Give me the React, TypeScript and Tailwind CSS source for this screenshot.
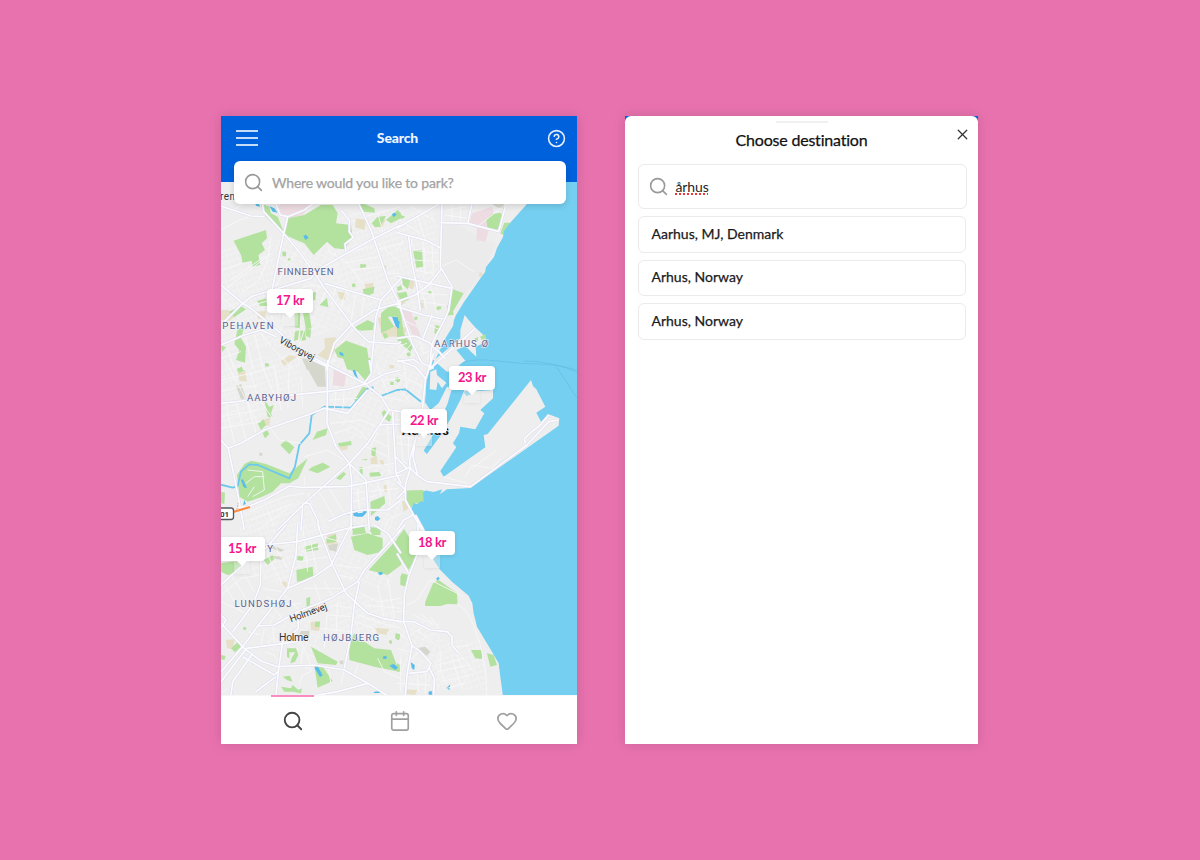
import React from 'react';
import { Search, Calendar, Heart, X, CircleHelp } from 'lucide-react';

type Sheet = {
  x: number;
  y: number;
  park: string;
  sand: string;
  rose: string;
  stone: string;
  pond: string;
  major: string;
  minor: string;
};

/* Map sheets: each is drawn in thirds of a pixel from its own origin. */
const sheets: Sheet[] = [
  {
    x: 221,
    y: 200,
    park: 'M38,122L135,90L138,115L122,130L132,150L112,165L118,195L95,200L92,182L65,188L60,165Z M118,10L145,20L150,40L170,50L190,100L160,75L135,50Z M200,55L250,45L300,15L335,15L350,40L345,70L390,75L395,112L370,148L340,145L318,125L278,165L250,130L190,105Z M452,70L470,50L495,48L478,80L462,82Z M495,60L530,30L540,40L540,55L510,70Z M412,10L430,12L460,25L462,38L430,35Z M183,155h12v14h-10z M200,177l8,-4l2,8l-7,3z M417,193l17,0l2,9l-18,2z M392,252l10,-2l2,10l-9,2z M425,268L460,260L458,280L430,290Z M108,303L135,295L138,318L118,318Z M268,278L285,276L283,300L272,302Z M295,315L318,293L322,322Z M220,340L238,338L236,385L222,382Z M245,335L265,340L272,385L255,388L250,360Z M222,395l12,-4l-3,28l-12,4z M238,392l14,0l3,28l-17,3z M252,388l18,0l-2,26l-12,-6z M23,335L60,318L75,328L40,352Z M50,387L70,380L60,415L75,440L72,488L45,480L55,450L40,432Z M0,436l15,6l-12,14z M340,450L375,422L438,445L448,510L400,510L380,480L350,472Z M480,340L505,318L540,322L540,350L500,350L520,380L480,400Z M395,385L440,360L460,370L455,390L420,392Z M485,400l12,0l5,12l-12,4z M530,400l10,-10v20z',
    sand: 'M405,55L435,60L430,90L402,82Z M475,65l20,-8l-12,26l-18,-4z M430,252L458,248L455,278L435,272Z M350,275L375,278L372,300L355,296Z M310,415L345,412L340,455L325,485L290,465L312,445Z M180,485L205,465L228,470L190,497Z M0,330L20,330L42,350L25,362L0,360Z M105,335l30,-2l-2,25l-22,-2z M235,320l36,-6l0,18l-30,4z M470,355L500,345L512,385L540,365L540,410L485,410Z M485,195l12,2l-2,14l-10,-3z',
    rose: 'M180,12L272,12L245,45L200,55L180,42L165,25Z',
    stone: 'M243,475L270,480L310,497L312,510L258,510Z',
    pond: 'M145,18L160,25L170,38L155,35Z M102,10l10,0l6,10l-12,-2z M247,108l8,-4l8,9l-10,7z M513,42l8,-4l6,6l-10,8z M355,455l10,4l4,10l-12,-4z M513,350L530,352L535,385L525,380Z',
    major:
      'M120,-20L128,35L195,108L230,150L285,225L310,265L405,390L442,425 M200,50L185,115L153,270 M160,0L178,45L200,50L250,30L290,0 M0,18L90,48L130,50 M360,30L385,60L385,95L397,112L372,132L375,155 M410,5L450,90L500,240L540,320 M540,75L440,125L285,212L270,235L90,290L60,315L0,375 M0,255L65,310L90,325L180,400L230,460L320,500 M310,250L480,300L540,235 M540,308L460,330L390,375L340,430L315,510 M480,300L465,350L450,510 M0,435L70,405L120,390L165,410 M440,425L530,432L540,425',
    minor:
      'M0,90L45,65L90,48 M10,270L150,160 M30,240L130,170 M5,210L60,190 M205,110L285,212 M230,150L200,190L165,260 M180,210L235,215 M320,150L380,190L430,260 M350,170L440,140 M370,190L470,170 M390,210L485,200 M290,240L350,310L390,330 M315,268L300,310 M345,262L330,320 M375,272L355,340 M405,280L385,385 M430,285L420,360 M95,365L150,440L210,500 M75,410L95,510 M0,475L60,455 M20,445L40,510 M100,395L125,500 M250,390L230,450 M190,335L180,395 M150,345L175,400 M0,290L45,330 M165,290L270,255L300,260 M430,50L540,20 M470,130L540,190 M460,150L540,130 M490,220L540,220 M470,40L490,110 M80,320L150,300 M360,430L400,385 M345,480L315,490 M30,35L70,10 M150,110L140,180L115,240L60,280',
  },
  {
    x: 397,
    y: 200,
    park: 'M48,150L75,150L78,200L58,203Z M268,60L285,42L312,38L318,60L300,90L272,85Z M322,68L340,68L320,105L310,100Z M168,268L200,280L165,340L150,322Z M15,235L40,238L32,268L18,255Z M0,262l12,-6l5,12l-15,5z M0,280L28,275L35,300L15,305Z M92,275l10,-3l4,6l-9,4z M116,322l14,-4l4,8l-14,5z M150,335l18,-3l2,12l-20,3z M115,375L128,378L125,405L112,400Z M52,352l8,-3l2,9l-9,3z M28,460l10,-3l4,8l-9,5z M0,320L12,335L20,400L48,440L40,455L0,420Z M0,40L25,50L15,56L0,50Z M240,380l4,6l-6,2z',
    sand: 'M32,240L55,242L48,268L28,262Z M0,275L22,285L25,310L5,318Z M68,302L80,300L80,325L72,325Z M0,385L30,380L25,400L5,412Z M248,215l10,5l-6,12l-6,-3z',
    rose: 'M225,40L255,30L285,20L290,40L268,60L275,90L265,125L238,120L240,88L218,70Z M14,330L38,325L72,410L50,412Z',
    stone: 'M285,12L322,12L320,25L300,22Z',
    pond: 'M0,360l8,5l-3,20h-5z',
    major:
      'M135,10L130,200L165,260L155,330L140,365L108,425L102,455L100,510 M0,85L60,50L130,10 M0,98L90,122L132,145 M130,68L212,70L225,10 M212,70L305,95L325,20 M0,228L165,265 M0,305L55,285L95,255L135,205 M35,110L45,190L60,260L70,332 M0,320L80,345L138,357 M5,310L45,430L75,490L110,505 M0,415L45,408L60,410L100,430L145,475 M105,345L78,415 M100,505L150,460L235,385 M0,485L50,478L66,490',
    minor:
      'M130,200L178,180L230,215 M150,30L210,20 M145,45L212,55 M165,15L165,68 M190,15L190,70 M235,85L330,10 M20,120L0,150 M45,110L40,170 M80,125L85,225 M105,135L110,230 M40,150L130,160 M48,180L132,185 M50,210L110,220 M65,240L90,330 M100,255L120,340 M70,280L150,285 M70,305L145,315 M10,60L70,100 M40,20L110,60 M60,45L85,120 M85,370L130,390 M65,410L80,460L130,440 M45,430L0,480 M0,440L30,430 M20,360L60,380 M115,420L90,480 M100,360L130,365',
  },
  {
    x: 221,
    y: 360,
    park: 'M365,-10L450,-5L448,40L438,68L410,35L378,28Z M400,120L425,80L440,85L405,130Z M178,255L195,240L220,262L205,283Z M275,240L288,215L320,205L315,225Z M262,330L275,320L305,308L328,320L290,340Z M350,250L390,243L392,255L355,260Z M345,355L368,335L375,342L358,360Z M110,190L128,178L135,195L120,210Z M125,220L138,210L145,222L132,235Z M130,120L145,140L158,135L150,160L155,172L140,170Z M48,345L70,312L90,302L135,312L205,340L260,295L232,355L205,370L180,370L155,395L120,412L80,425L55,410Z M47,27L62,20L68,33L52,38Z M132,10l10,0l3,8l-12,2z M448,425L490,408L493,430L450,468Z M390,495L430,505L430,510L390,510Z M415,322h10v27h-8z M445,338l30,-2l5,12l-32,2z M452,265l14,-3l-3,28l-12,-4z M482,158l8,-8l22,20l-6,16l-18,-12z M0,395L12,398L10,432L0,430Z M508,65h10v10h-10z M524,52l14,3l-3,12l-12,-5z M420,300l18,-4v5z',
    sand: 'M50,35L72,30L78,65L55,62Z M180,0L215,0L190,13Z M128,180L148,172L145,200L130,195Z M355,260l25,-4l0,12l-18,4z M448,295L468,288L470,312L450,312Z M475,300l12,0l3,17l-10,-3z M488,375l8,0l2,22l-9,-3z M505,15l14,0l0,9l-14,2z',
    rose: 'M338,28L375,45L370,80L335,75Z',
    stone: 'M245,0L310,10L315,80L290,80Z M45,78L60,72L75,115L60,118Z M115,278l8,0l2,8l-9,2z',
    pond: 'M395,452L402,450L412,460L425,458L430,446L439,455L425,470L410,470L398,468Z M462,472l8,-4l8,8l-8,7l-8,-3z M70,420L66,435L75,432Z M60,360L66,358L78,385L68,382Z M395,30L402,30L412,58L400,45Z',
    major:
      'M0,130L230,103L380,88L440,70L490,42L540,30 M250,-20L320,15L430,70L480,110L505,150L540,155 M320,0L318,190L345,260L385,310L435,360L445,510 M0,240L22,265L50,400L70,510 M22,265L60,250L130,210L260,165L310,145L380,160L440,90 M50,442L80,440L130,420L205,378L240,382L380,380L450,365L540,345 M505,150L440,250L385,310L245,435L170,510 M245,435L240,510 M245,430L265,430L290,480L295,510 M385,310L392,360L390,510 M445,0L452,40L430,70 M515,155L525,340L540,370 M320,485L370,462L420,450L500,450L540,420 M478,195L540,192',
    minor:
      'M10,0L55,80L110,190 M0,60L90,40L160,20 M0,95L50,82L110,78 M85,30L110,110L155,175 M120,10L160,105 M160,15L180,150 M205,15L200,145 M240,50L245,140 M15,130L40,250 M45,130L75,240 M80,125L105,220 M0,170L110,150 M0,205L120,185 M140,195L175,240L240,250 M345,90L340,150 M370,90L365,150 M325,120L410,115 M330,190L420,180L470,200 M340,220L400,200L440,240 M250,290L320,270L370,300 M80,330L125,335L130,390L95,410 M75,370L100,350L130,350 M100,380L80,410 M250,350L250,380 M85,455L190,410L250,400 M90,480L215,430 M110,510L200,445 M140,450L160,500 M260,400L300,510 M290,390L345,480 M325,385L370,460 M390,400L530,385 M395,425L470,405 M410,385L415,450 M470,370L480,405 M500,360L510,450 M400,330L450,320L520,310 M435,260L500,290 M460,240L500,260 M475,200L450,260 M500,195L505,340 M540,460L500,480L490,510 M465,10L500,100 M490,60L540,55 M475,110L540,120',
  },
  {
    x: 397,
    y: 360,
    park: 'M27,372L78,380L82,425L50,432L40,448L25,415Z M10,275L35,272L38,285L22,292Z M0,50L10,60L0,70Z',
    sand: 'M15,425L30,420L35,445L20,455Z',
    rose: '',
    stone: '',
    pond: '',
    major:
      'M0,340L38,322L60,345L90,365L220,380L390,255L455,185L485,180 M110,-20L85,60L75,160L55,240L38,300L40,325L25,375L25,420L75,512 M0,365L25,390L0,415 M385,250L382,235L405,215L430,195L455,165 M0,510L20,480L48,465 M55,240L48,290L62,345 M0,0L55,20L85,55 M30,325L-5,290',
    minor:
      'M205,350L225,315L285,325L310,295 M225,325L300,270 M140,350L210,370 M0,230L70,235 M0,250L55,258 M10,225L20,320 M35,230L35,300 M0,180L60,175 M0,40L80,80 M20,0L30,90 M10,90L40,130 M440,180L400,220 M0,300L30,310',
  },
  {
    x: 221,
    y: 525,
    park: 'M0,115L45,108L80,100L50,140L20,150L0,140Z M395,8L430,5L435,25L395,30Z M390,35L440,25L485,40L485,80L440,90L400,75Z M440,5L480,10L478,30L455,30Z M540,30L540,120L500,150L443,135Z M226,135L275,125L278,160L228,170Z M250,65L290,55L292,75L252,80Z M230,92L248,95L245,108L228,105Z M256,220L268,215L266,250L257,252Z M316,40L345,28L346,50L318,55Z M128,105L155,90L160,102L140,120Z M283,290l14,0l-2,16l-13,0z M384,350L430,350L460,370L510,375L535,440L460,425L385,405Z M270,365L350,410L345,420L290,415Z M198,370L225,370L232,390L222,410L208,415L212,400L222,382L205,382L205,400L198,395Z M280,420L305,425L335,468L290,488Z M30,370L50,352L60,365L42,382Z M0,390l14,3l-4,12l-10,-2z M65,308l8,-3l4,7l-8,4z M505,345l8,2l-1,10l-8,-3z M524,325l14,3l-6,16l-10,-4z M185,455l22,-3l8,18l-16,-4z M180,485L210,490L215,480L232,495L243,490L240,505L218,500L190,500Z M388,350L400,325L415,350Z',
    sand: 'M182,170l15,0l0,16l-14,-2z M265,240L290,235L285,252L268,250Z M268,292L298,288L295,318L270,315Z M320,28L345,25L348,55L312,60Z M462,308L505,312L495,330L470,325Z M15,345L42,342L35,372L18,370Z',
    rose: '',
    stone: 'M150,60L190,75L180,80L155,72Z M150,92L185,95L185,105L165,102Z M320,60L352,55L345,80L325,75Z M240,318L265,318L265,332L235,328Z M355,408l12,-2l0,12l-9,0z',
    pond: 'M280,428l10,-5l15,28l-8,5z M470,143l12,-3l4,7l-9,4z M485,395l10,-3l3,8l-10,3z M505,422l12,-5l14,10l-8,8z M460,500l18,-2l0,6h-20z',
    major:
      'M0,180L55,130L130,75L195,0 M230,0L225,90L200,190L120,290L65,365L0,440 M290,0L335,120L375,205L440,265L485,280L540,290 M120,100L118,180L95,240L35,320 M130,60L230,50L380,10L440,0 M390,0L330,120L280,155L200,190 M540,15L430,135L410,170L330,220L230,260L160,300L110,303 M415,170L400,240L390,330L370,430 M0,270L15,285L0,310 M0,295L70,370L120,408L170,425L280,420L370,435L440,475L500,512 M75,370L230,350 M230,265L232,310L185,350L172,440L165,510 M95,385L35,470L30,510 M65,395L160,450L170,440 M0,470L75,372 M440,475L350,500L280,512 M460,0L500,25L540,85 M165,455L105,500',
    minor:
      'M0,210L60,160L120,150 M30,150L100,260 M10,180L60,260 M60,130L100,200 M140,90L190,190 M160,60L200,130 M125,190L180,200 M135,215L200,240L240,235 M150,240L190,290 M190,210L240,260 M240,80L310,60 M235,110L320,95 M245,0L260,140 M270,55L290,150 M300,35L360,50 M340,120L420,130 M350,150L400,160 M310,170L340,220 M280,175L300,235 M250,190L360,190 M340,240L390,250 M320,270L395,275 M320,250L310,370 M350,230L345,330 M300,310L390,320 M305,340L385,350 M410,200L470,230L540,220 M430,240L540,250 M410,270L500,300L540,310 M405,290L455,310L470,345 M500,160L520,280 M470,180L490,280 M130,310L120,360 M155,300L160,355 M80,320L120,330 M240,350L270,420 M130,380L160,390L170,410 M245,370L240,420 M250,430L265,425L270,440L245,450L235,480 M320,420L330,475 M370,430L360,480 M470,400L490,440L540,460 M410,420L400,450 M0,505L20,490 M0,230L85,270',
  },
  {
    x: 397,
    y: 525,
    park: 'M0,40L22,12L40,45L60,90L35,135L0,80Z M10,155L15,145L33,150L28,185L10,180Z M85,230L108,175L125,165L180,205L182,238L150,237L130,243L84,243Z M222,375L255,375L255,402L235,400Z M270,385L290,390L300,420L280,425Z M0,325l8,3l0,15l-8,3z M0,415l10,5l0,20h-10z',
    sand: 'M28,493L60,495L55,510L28,508Z',
    rose: '',
    stone: 'M65,368L85,365L100,380L90,392L72,380Z',
    pond: 'M42,412L53,420L52,435L44,430Z M118,160l6,-5l4,6l-8,6z M95,500l8,-3l4,12l-12,0z M148,490L160,478L157,495Z',
    major:
      'M65,30L60,90L35,155L22,210L20,290L45,362L30,450L25,512 M0,85L35,145 M0,290L50,290L100,315L150,320L165,335L165,360L185,385 M45,362L70,380L102,415L90,440L35,445 M95,425L112,460L110,512 M0,25L25,-2 M55,-30L78,12L110,80 M62,0L65,35',
    minor:
      'M30,240L60,225L100,165L200,215 M180,235L205,255L230,300L250,360L265,430L270,512 M0,235L25,232 M0,260L25,258 M50,270L110,300 M70,265L100,290 M60,315L110,355 M40,330L85,300 M75,345L110,325 M100,275L130,315 M0,320L28,340 M0,370L40,380 M60,385L35,410 M130,380L130,440L150,480 M150,370L220,360 M180,390L210,460L190,490 M120,420L200,400 M120,440L220,420 M130,470L220,450 M150,490L200,475 M165,400L190,480 M195,395L230,440 M60,440L65,500 M85,440L85,505 M0,475L100,480 M10,400L10,500',
  },
];

const riverMain = 'M221,484.7L232.7,487.7L237.7,486L241,471.7L249.3,464.3L258,465L289.3,478.3L295,466.7L299.3,445L309.3,433.3L311.7,415L324.3,406.7L351,407.7L367.7,388.3L372.7,387.3L372.7,391.7 M381,396L397,390L405.3,389.3L421,401.7';

const labels = [
  { t: 'FINNEBYEN', x: 277.5, y: 275.3, w: 56 },
  { t: 'SPEHAVEN', x: 215, y: 328.8, w: 58.5 },
  { t: 'AABYHØJ', x: 247, y: 400.7, w: 49 },
  { t: 'AARHUS Ø', x: 434, y: 347.3, w: 54 },
  { t: 'VIBY', x: 247, y: 551.8, w: 26 },
  { t: 'LUNDSHØJ', x: 234.5, y: 607.3, w: 57 },
  { t: 'HØJBJERG', x: 323, y: 641.3, w: 56 },
];

function inSheets(key: Exclude<keyof Sheet, 'x' | 'y'>) {
  return sheets.map((s) => (
    <path key={`${key}${s.x}-${s.y}`} d={s[key]} transform={`translate(${s.x} ${s.y}) scale(0.33333)`} />
  ));
}

function CityMap() {
  return (
    <svg viewBox="221 182 356 513" className="block h-full w-full" aria-hidden="true">
      <defs>
        <pattern id="blocksA" width="9" height="6" patternUnits="userSpaceOnUse" patternTransform="rotate(-18)">
          <path d="M0,1H9M2,1V6M6.5,1V4" stroke="#f5f5f6" strokeWidth="0.7" fill="none" />
        </pattern>
        <pattern id="blocksB" width="7" height="10" patternUnits="userSpaceOnUse" patternTransform="rotate(24)">
          <path d="M0,2H7M0,7H4M3,2V10" stroke="#f5f5f6" strokeWidth="0.7" fill="none" />
        </pattern>
      </defs>
      <rect x="221" y="182" width="356" height="514" fill="#eeeeee" />
      <path
        fill="url(#blocksA)"
        d="M221,250L270,240L280,290L330,330L300,345L221,350Z M221,365L300,350L300,400L221,435Z M325,215L435,205L442,290L395,330L330,280Z M240,500L300,500L330,520L290,590L240,570Z M330,590L395,600L395,640L330,640Z M440,640L480,640L490,690L430,690Z"
      />
      <path
        fill="url(#blocksB)"
        d="M270,240L330,235L360,330L310,330Z M330,340L425,340L420,430L350,440L330,400Z M350,470L410,460L410,500L360,540Z M320,530L400,500L390,590L340,580Z M260,610L320,620L320,660L270,650Z M400,620L440,620L440,690L400,690Z"
      />
      <path d="M441,225L455,222L483,240L496,243L484,270L460,300L450,286L441,268Z" fill="#ebebeb" />
      <g fill="#d5d7cc">{inSheets('stone')}</g>
      <g fill="#eddce2">{inSheets('rose')}</g>
      <g fill="#e7e0c8">{inSheets('sand')}</g>
      <g fill="#b3e19e">{inSheets('park')}</g>

      <g fill="#75cff0">
        <path d="M545,180L527,204L510,223L504,231L503,237L497,248L494,257L486,267L485,272L480,279L464,302L456,315L454,320L453,326L445,339L439,352L433,364L427,380L425,404L430,500L580,500L580,180Z" />
        <path
          transform="translate(397 360) scale(0.33333)"
          d="M105,0L88,60L85,130L85,392L78,395L80,425L72,424L60,432L50,430L42,448L52,470L78,515L545,515L545,0Z"
        />
        <path
          transform="translate(397 525) scale(0.33333)"
          d="M60,-30L78,18L103,95L130,135L165,170L215,212L226,235L230,265L240,305L285,380L305,415L308,440L318,515L545,515L545,-30Z"
        />
      </g>
      <g fill="#eeeeee">
        <path
          transform="translate(397 360) scale(0.33333)"
          d="M220,384L150,388L128,403L136,388L110,396L80,390L0,392L0,130L85,128L100,150L125,130L150,80L165,85L205,80L218,95L288,90L288,115L250,150L262,160L235,208L190,200L186,220L168,250L178,262L130,333L140,350L265,262L260,225L272,222L390,75L402,60L408,78L418,88L445,140L418,158L432,185L455,163L487,175L485,197Z"
        />
        <path
          transform="translate(397 200) scale(0.33333)"
          d="M203,345L215,360L236,383L266,412L262,428L236,440L238,470L222,455L205,438L178,450L205,482L185,496L210,510L150,515L120,490L105,500L112,480L190,415L190,390Z"
        />
        <path
          transform="translate(397 360) scale(0.33333)"
          d="M100,35L118,28L120,45L148,68L135,85L122,65L118,90L98,88Z"
        />
      </g>
      <path
        transform="translate(397 360) scale(0.33333)"
        d="M165,85L205,82L190,120L160,178L128,230L90,282L80,272L120,205L152,130Z M200,95L212,92L222,104L208,108Z"
        fill="#75cff0"
      />
      <path d={riverMain} fill="none" stroke="#6bc8ee" strokeWidth="1.8" strokeLinejoin="round" />
      <path d="M462,363Q474,358 498,361T540,364T577,370 M524,361Q552,361 577,372 M556,366L577,398" fill="none" stroke="#5cb6df" strokeWidth="0.5" />
      <g fill="#55bcec">{inSheets('pond')}</g>
      <g fill="none" stroke="#f8f8fa" strokeWidth="2.6" strokeLinejoin="round">
        {inSheets('minor')}
      </g>
      <g fill="none" stroke="#dcdded" strokeWidth="8.2" strokeLinejoin="round">
        {inSheets('major')}
      </g>
      <g fill="none" stroke="#fcfcff" strokeWidth="5" strokeLinejoin="round">
        {inSheets('major')}
      </g>
      <path d="M480,337l5,-3l1,4l-4,2z M474,339l4,-2v4z" fill="#b3e19e" />
      <path d="M233,512L250,507" stroke="#ff8a3c" strokeWidth="2.2" />
      <path d="M237,510L238,503" stroke="#ffb27c" strokeWidth="1" strokeDasharray="2 1" />
      <rect x="212" y="508" width="21.5" height="11.5" rx="2.5" fill="#ffffff" stroke="#55565c" strokeWidth="1.3" />
      <text x="220" y="516.8" fontSize="8" fontWeight="700" fill="#333" fontFamily="Roboto, sans-serif">01</text>

      <g fontFamily="Roboto, 'Liberation Sans', sans-serif" fontSize="9.6" fill="#5a6390" stroke="#f3f3f5" strokeWidth="1.2" paintOrder="stroke">
        {labels.map((l) => (
          <text key={l.t} x={l.x} y={l.y} textLength={l.w} lengthAdjust="spacing">
            {l.t}
          </text>
        ))}
      </g>
      <g fontFamily="Roboto, 'Liberation Sans', sans-serif" fill="#333333" stroke="#f3f3f5" strokeWidth="1.2" paintOrder="stroke">
        <text x="220" y="199.5" fontSize="10" textLength="15">ren</text>
        <text x="279" y="640.8" fontSize="10.5" textLength="29.5">Holme</text>
        <text transform="translate(278.5 342) rotate(29)" fontSize="9.6" textLength="39">Viborgvej</text>
        <text transform="translate(291 622.3) rotate(-20)" fontSize="9.6" textLength="39">Holmevej</text>
        <text x="402" y="435.4" fontSize="13" fontWeight="700" fill="#111" textLength="47">Aarhus</text>
      </g>
    </svg>
  );
}

const prices = [
  { label: '17 kr', place: 'left-[46px] top-[107px]' },
  { label: '23 kr', place: 'left-[228px] top-[184px]' },
  { label: '22 kr', place: 'left-[180px] top-[227px]' },
  { label: '18 kr', place: 'left-[188px] top-[349px]' },
  { label: '15 kr', place: 'left-[-2px] top-[355px]' },
];

function PricePin({ label, place }: { label: string; place: string }) {
  return (
    <div className={`absolute flex h-[29px] w-[46px] flex-col items-center ${place}`}>
      <div className="absolute left-[15px] top-[24px] h-[13px] w-[16px] bg-[#eeeeee]/40 shadow-[0_1px_3px_rgba(0,0,0,0.06)]" />
      <div className="relative flex h-[23.5px] w-full items-center justify-center rounded-[4px] bg-white text-[13px] font-bold tracking-[-0.4px] text-[#f5148c] shadow-[0_1px_4px_rgba(0,0,0,0.12)]">
        {label}
      </div>
      <svg width="12" height="6" viewBox="0 0 12 6" className="relative -mt-px block">
        <path d="M0,0H12L6,6Z" fill="#ffffff" />
      </svg>
    </div>
  );
}

function SearchScreen() {
  return (
    <section className="flex h-[628px] w-[356px] flex-col overflow-hidden bg-white">
      <header className="h-[66px] shrink-0 bg-[#0061dd] px-[15px]">
        <div className="grid h-[44px] grid-cols-[1fr_auto_1fr] items-center">
          <div className="flex w-[22px] flex-col gap-[5px]">
            <span className="h-[2px] bg-[#c5dbf8]" />
            <span className="h-[2px] bg-[#c5dbf8]" />
            <span className="h-[2px] bg-[#c5dbf8]" />
          </div>
          <h1 className="pb-px pr-[3px] text-[14px] font-black tracking-[-0.15px] text-[#eef5ff]">Search</h1>
          <CircleHelp size={19} strokeWidth={2} className="-mr-[4px] justify-self-end text-[#e6f0fd]" />
        </div>
      </header>
      <div className="relative h-[513px] shrink-0">
        <div className="h-full overflow-hidden">
          <CityMap />
        </div>
        <div className="absolute inset-0 overflow-hidden">
          {prices.map((p) => (
            <PricePin key={p.label} label={p.label} place={p.place} />
          ))}
        </div>
        <div className="absolute left-[13px] top-[-21px] flex h-[43px] w-[332px] items-center gap-[8px] rounded-[6px] bg-white pl-[9px] shadow-[0_2px_6px_rgba(0,0,0,0.14)]">
          <Search size={21} strokeWidth={1.8} className="text-[#999999]" />
          <span className="text-[14px] tracking-[-0.17px] text-[#a3a3a3] [-webkit-text-stroke:0.25px_#a3a3a3]">Where would you like to park?</span>
        </div>
      </div>
      <nav className="relative grid h-[49px] grid-cols-3 border-t border-[#f7f7f7] pl-[18px] pr-[16px]">
        <span className="absolute left-[50px] top-[-1px] h-[1.5px] w-[43px] bg-[#f98cc0]" />
        <span className="flex items-center justify-center pt-[2px]"><Search size={22} strokeWidth={2} className="text-[#444444]" /></span>
        <span className="flex items-center justify-center pt-[2px]"><Calendar size={22} strokeWidth={1.8} className="text-[#a0a0a0]" /></span>
        <span className="flex items-center justify-center pt-[2px]"><Heart size={22} strokeWidth={1.9} className="text-[#a0a0a0]" /></span>
      </nav>
    </section>
  );
}

const results = ['Aarhus, MJ, Denmark', 'Arhus, Norway', 'Arhus, Norway'];

function DestinationScreen() {
  return (
    <section className="h-[628px] w-[353px] bg-[#0061dd]">
      <div className="relative flex h-full flex-col rounded-t-[6px] bg-white px-[13px] pt-[5px]">
        <span className="h-[2px] w-[52px] self-center bg-[#f0f0f0]" />
        <X size={17} strokeWidth={1.8} className="absolute right-[7px] top-[10px] text-[#333333]" />
        <h2 className="mt-[7px] text-center text-[16px] leading-[20px] tracking-[-0.2px] text-[#111111] [-webkit-text-stroke:0.25px_#111] [font-variant-ligatures:none]">Choose destination</h2>
        <div className="mt-[14px] flex h-[45px] w-[329px] items-center gap-[7px] rounded-[6px] border border-[#ebebeb] pl-[8.5px]">
          <Search size={21} strokeWidth={1.8} className="text-[#999999]" />
          <span className="text-[14px] leading-[14px] tracking-[-0.1px] text-[#1f1f1f] underline decoration-[#ee3333] decoration-dotted decoration-[1.5px] underline-offset-[2px]">århus</span>
        </div>
        <ul className="mt-[7px] flex flex-col gap-[7px]">
          {results.map((r, i) => (
            <li key={i} className="flex h-[36.6px] w-[328px] items-center rounded-[6px] border border-[#ebebeb] pb-[2px] pl-[12.5px] text-[14px] text-[#1a1a1a] [-webkit-text-stroke:0.25px_#1a1a1a]">
              {r}
            </li>
          ))}
        </ul>
      </div>
    </section>
  );
}

export default function App() {
  return (
    <main className="flex h-[860px] w-[1200px] items-center bg-[#e872ae] pl-[221px] font-['Lato',sans-serif]">
      <div className="flex gap-[48px]">
        <div className="shadow-[0_0_12px_rgba(0,0,0,0.13)]"><SearchScreen /></div>
        <div className="shadow-[0_0_12px_rgba(0,0,0,0.13)]"><DestinationScreen /></div>
      </div>
    </main>
  );
}
